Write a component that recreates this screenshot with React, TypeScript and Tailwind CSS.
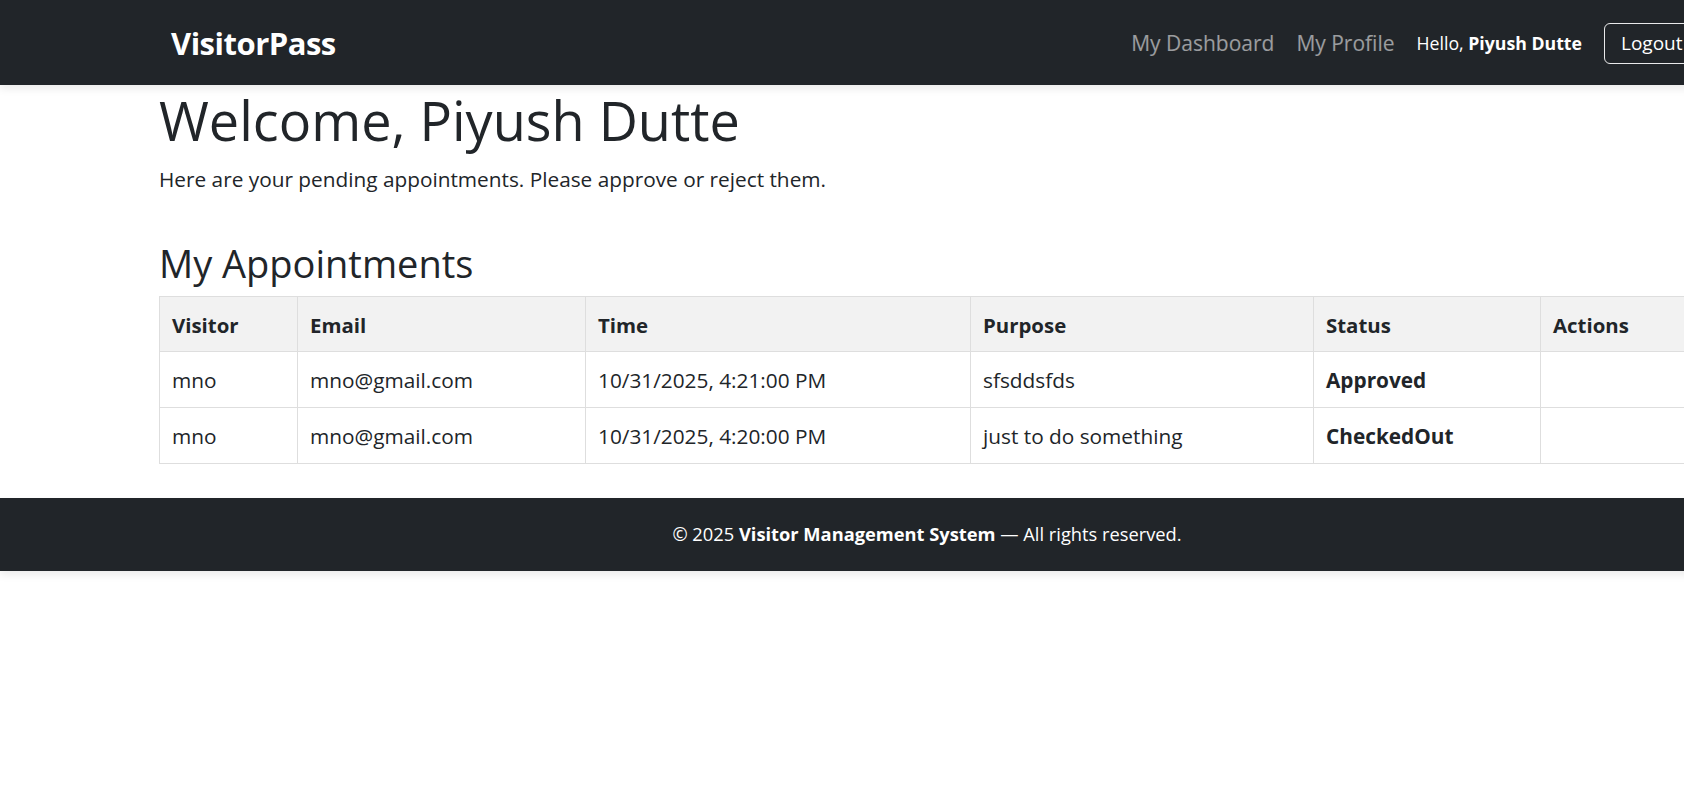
import React from 'react';

interface Appointment {
  visitor: string;
  email: string;
  time: string;
  purpose: string;
  status: string;
}

const appointments: Appointment[] = [
  { visitor: 'mno', email: 'mno@gmail.com', time: '10/31/2025, 4:21:00 PM', purpose: 'sfsddsfds', status: 'Approved' },
  { visitor: 'mno', email: 'mno@gmail.com', time: '10/31/2025, 4:20:00 PM', purpose: 'just to do something', status: 'CheckedOut' },
];

const font = { fontFamily: '"Open Sans", "Noto Sans", sans-serif' };

function Navbar() {
  return (
    <nav className="h-[85px] pt-[2px] bg-[#212529] shadow-[0_4px_8px_rgba(0,0,0,0.08)] flex items-center pl-[171px] pr-[115px] relative z-10">
      <span className="text-[31px] font-bold text-white tracking-[-0.5px] leading-none">VisitorPass</span>
      <div className="ml-auto flex items-center gap-[22px]">
        <a className="text-[21px] text-white/55">My Dashboard</a>
        <a className="text-[21px] text-white/55">My Profile</a>
        <span className="text-[17.7px] text-white">
          Hello, <strong className="font-bold">Piyush Dutte</strong>
        </span>
        <button className="h-[41px] w-[135px] text-left pl-[16px] text-[19px] text-white border border-white/90 rounded-[6px]">
          Logout
        </button>
      </div>
    </nav>
  );
}

export default function App() {
  return (
    <div className="w-full min-h-[790px] bg-white overflow-hidden text-[#212529]" style={font}>
      <div className="w-[1854px]">
        <Navbar />

        <main className="w-[1536px] mx-auto">
          <h1 className="mt-[3px] text-[54px] leading-[1.2] font-normal">Welcome, Piyush Dutte</h1>
          <p className="mt-[11px] text-[20.8px] leading-[1.5]">
            Here are your pending appointments. Please approve or reject them.
          </p>

          <h2 className="mt-[46px] text-[38px] leading-[1.2] font-normal">My Appointments</h2>

          <table className="mt-[9px] w-full table-fixed border-collapse text-[20.8px]">
            <colgroup>
              <col className="w-[138px]" />
              <col className="w-[288px]" />
              <col className="w-[385px]" />
              <col className="w-[343px]" />
              <col className="w-[227px]" />
              <col />
            </colgroup>
            <thead>
              <tr className="bg-[#f2f2f2]">
                {['Visitor', 'Email', 'Time', 'Purpose', 'Status', 'Actions'].map((h) => (
                  <th key={h} className="h-[55px] px-[12px] pt-[3px] text-left font-bold text-[20.4px] border border-[#dedede]">
                    {h}
                  </th>
                ))}
              </tr>
            </thead>
            <tbody>
              {appointments.map((a, i) => (
                <tr key={i}>
                  <td className="h-[56px] px-[12px] pt-[4px] border border-[#dedede]">{a.visitor}</td>
                  <td className="h-[56px] px-[12px] pt-[4px] border border-[#dedede]">{a.email}</td>
                  <td className="h-[56px] px-[12px] pt-[4px] border border-[#dedede]">{a.time}</td>
                  <td className="h-[56px] px-[12px] pt-[4px] border border-[#dedede]">{a.purpose}</td>
                  <td className="h-[56px] px-[12px] pt-[4px] border border-[#dedede] font-bold">{a.status}</td>
                  <td className="h-[56px] px-[12px] pt-[4px] border border-[#dedede]"></td>
                </tr>
              ))}
            </tbody>
          </table>
        </main>

        <footer className="mt-[34px] h-[73px] bg-[#212529] shadow-[0_4px_8px_rgba(0,0,0,0.08)] flex items-center justify-center text-white text-[18.3px]">
          <span>
            © 2025 <strong className="font-bold">Visitor Management System</strong> — All rights reserved.
          </span>
        </footer>
      </div>
    </div>
  );
}
